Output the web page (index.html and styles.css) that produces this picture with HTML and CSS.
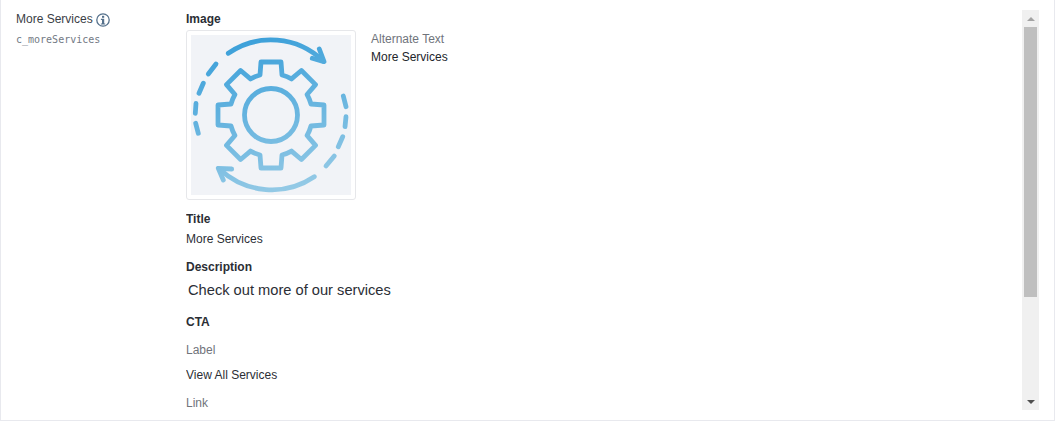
FILE: index.html
```html
<!DOCTYPE html>
<html lang="en">
<head>
    <meta charset="UTF-8">
    <title>More Services</title>
    <link rel="stylesheet" href="styles.css">
</head>
<body>
    <div class="panel">
        <div class="field-info">
            <div class="field-name">
                More Services
                <svg class="info-icon" width="14" height="14" viewBox="0 0 14 14">
                    <circle cx="7" cy="7" r="6.2" fill="none" stroke="#55718c" stroke-width="1.3"/>
                    <rect x="6" y="2.8" width="2.2" height="2" fill="#55718c"/>
                    <path d="M4.9 5.8h3.3v4.6h1v1.1H4.9v-1.1h1.1V6.9H4.9z" fill="#55718c"/>
                </svg>
            </div>
            <div class="field-id">c_moreServices</div>
        </div>
        <div class="field-content">
            <div class="group-title">Image</div>
            <div class="image-row">
                <div class="image-box">
                    <svg class="image-art" width="160" height="160" viewBox="0 0 160 160">
                        <defs>
                            <linearGradient id="art" gradientUnits="userSpaceOnUse" x1="60" y1="0" x2="100" y2="160">
                                <stop offset="0" stop-color="#3a9fd9"/>
                                <stop offset="1" stop-color="#97cbe6"/>
                            </linearGradient>
                        </defs>
                        <rect width="160" height="160" fill="#f1f3f7"/>
                        <g class="art-lines" fill="none" stroke="url(#art)" stroke-width="4.8" stroke-linecap="round" stroke-linejoin="round">
                            <circle cx="80" cy="80" r="26.5"/>
                            <path d="M69 40L70 27H90L91 40A41 41 0 0 1 100.5 43.94L110.4 35.46L124.54 49.6L116.06 59.5A41 41 0 0 1 120 69L133 70V90L120 91A41 41 0 0 1 116.06 100.5L124.54 110.4L110.4 124.54L100.5 116.06A41 41 0 0 1 91 120L90 133H70L69 120A41 41 0 0 1 59.5 116.06L49.6 124.54L35.46 110.4L43.94 100.5A41 41 0 0 1 40 91L27 90V70L40 69A41 41 0 0 1 43.94 59.5L35.46 49.6L49.6 35.46L59.5 43.94A41 41 0 0 1 69 40Z"/>
                            <path d="M37.3 18.3A75 75 0 0 1 132.3 26.2"/>
                            <path d="M128.3 14L133 26.7L121.3 23.3"/>
                            <path d="M123.3 141.7A76 76 0 0 1 29 134.5"/>
                            <path d="M32.3 145L27.3 133.3L40.7 134"/>
                            <path d="M25 29L17.3 39M12.3 48.3L8 58.3M5 68.3L4.3 78.3M4.7 88.3L7.3 98.3"/>
                            <path d="M152.3 61L155 71.7M155 81.7L154 91.7M151.7 101.7L147.3 111.7M143.3 121L135 131"/>
                        </g>
                    </svg>
                </div>
                <div class="alt-text">
                    <div class="sub-label">Alternate Text</div>
                    <div class="alt-value">More Services</div>
                </div>
            </div>
            <div class="group-title title-gap">Title</div>
            <div class="value">More Services</div>
            <div class="group-title desc-gap">Description</div>
            <div class="description">Check out more of our services</div>
            <div class="group-title cta-gap">CTA</div>
            <div class="sub-label label-gap">Label</div>
            <div class="value view-gap">View All Services</div>
            <div class="sub-label link-gap">Link</div>
        </div>
        <div class="scrollbar">
            <div class="scroll-btn"><span class="arrow-up"></span></div>
            <div class="scroll-thumb"></div>
            <div class="scroll-track"></div>
            <div class="scroll-btn"><span class="arrow-down"></span></div>
        </div>
    </div>
</body>
</html>
```

FILE: styles.css
```css
html, body {
    margin: 0;
    background-color: #fff;
    overflow: hidden;
}
body {
    font-family: "Liberation Sans", Arial, sans-serif;
    font-size: 12px;
    color: #2b2e35;
}
.panel {
    display: flex;
    box-sizing: border-box;
    width: 1055px;
    height: 421px;
    padding: 10px 15px 10px 15px;
    border: 1px solid #e8e9ee;
    border-top: none;
}
.field-info {
    width: 170px;
    flex: none;
}
.field-name {
    display: flex;
    align-items: center;
    gap: 3px;
    height: 18px;
    color: #3a3e46;
}
.info-icon {
    margin-top: 2px;
}
.field-id {
    margin-top: 5px;
    font-family: "DejaVu Sans Mono", monospace;
    font-size: 10px;
    line-height: 14px;
    color: #727984;
}
.field-content {
    flex: 1;
    overflow: hidden;
}
.group-title {
    font-weight: bold;
    line-height: 18px;
}
.image-row {
    display: flex;
    margin-top: 2px;
}
.image-box {
    box-sizing: border-box;
    width: 170px;
    height: 170px;
    padding: 4px;
    background-color: #fff;
    border: 1px solid #e6e7ea;
    border-radius: 3px;
}
.image-art {
    display: block;
}
.art-lines {
    filter: blur(0.4px);
}
.alt-text {
    margin-left: 15px;
}
.sub-label {
    line-height: 18px;
    color: #70747b;
}
.alt-value {
    color: #22252b;
    line-height: 18px;
}
.title-gap {
    margin-top: 10px;
}
.value {
    margin-top: 2px;
    line-height: 18px;
}
.desc-gap {
    margin-top: 10px;
}
.description {
    margin: 4px 0 0 2px;
    font-size: 14.67px;
    line-height: 20px;
}
.cta-gap {
    margin-top: 13px;
}
.label-gap {
    margin-top: 10px;
}
.view-gap {
    margin-top: 7px;
}
.link-gap {
    margin-top: 10px;
}
.scrollbar {
    display: flex;
    flex-direction: column;
    flex: none;
    width: 17px;
    height: 400px;
    background-color: #f0f0f0;
}
.scroll-btn {
    display: flex;
    align-items: center;
    justify-content: center;
    height: 17px;
    flex: none;
}
.arrow-up {
    width: 0;
    height: 0;
    border-left: 4px solid transparent;
    border-right: 4px solid transparent;
    border-bottom: 4px solid #a3a3a3;
}
.arrow-down {
    width: 0;
    height: 0;
    border-left: 4px solid transparent;
    border-right: 4px solid transparent;
    border-top: 4px solid #505050;
}
.scroll-thumb {
    width: 13px;
    height: 270px;
    margin: 0 2px;
    flex: none;
    background-color: #bfbfbf;
}
.scroll-track {
    flex: 1;
}
```
